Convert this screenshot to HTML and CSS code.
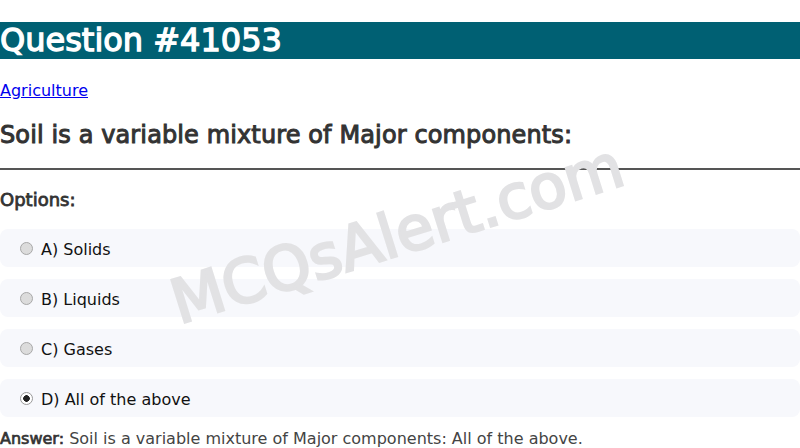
FILE: index.html
```html
<!DOCTYPE html>
<html>
<head>
<meta charset="utf-8">
<link rel="stylesheet" href="styles.css">
</head>
<body>
<div class="page">
  <h1 class="title">Question #41053</h1>
  <p class="cat"><a href="#">Agriculture</a></p>
  <h2 class="question">Soil is a variable mixture of Major components:</h2>
  <hr class="rule">
  <h3 class="opts-head">Options:</h3>
  <div class="options">
    <label class="option"><input type="radio" name="q" disabled><span>A) Solids</span></label>
    <label class="option"><input type="radio" name="q" disabled><span>B) Liquids</span></label>
    <label class="option"><input type="radio" name="q" disabled><span>C) Gases</span></label>
    <label class="option"><input type="radio" name="q" checked disabled><span>D) All of the above</span></label>
  </div>
  <p class="answer"><b>Answer:</b> Soil is a variable mixture of Major components: All of the above.</p>
  <div class="watermark">MCQsAlert.com</div>
</div>
</body>
</html>
```
FILE: styles.css
```css
html, body { margin: 0; padding: 0; background: #fff; }
body { font-family: "DejaVu Sans", sans-serif; overflow: hidden; }
.page { position: relative; height: 448px; overflow: hidden; }
.title {
  margin: 22px 0 0;
  background: #006073;
  color: #fff;
  font-size: 32px;
  font-weight: normal;
  -webkit-text-stroke: 1.3px #fff;
  line-height: 37px;
  height: 37px;
}
.cat { margin: 22px 0 0; font-size: 16px; line-height: 20px; }
.cat a { color: #0000ee; }
.question {
  margin: 19px 0 0;
  font-size: 24px;
  font-weight: normal;
  letter-spacing: 0.12px;
  -webkit-text-stroke: 1px #333;
  color: #333;
  line-height: 30px;
}
.rule { margin: 18px 0 0; border: 0; border-top: 2px solid #555; height: 0; }
.opts-head {
  margin: 19px 0 0;
  font-size: 18px;
  font-weight: normal;
  -webkit-text-stroke: 0.8px #333;
  color: #333;
  line-height: 22px;
}
.options { display: flex; flex-direction: column; gap: 12px; margin-top: 18px; }
.option {
  display: flex;
  align-items: center;
  height: 38px;
  background: #f7f8fc;
  border-radius: 8px;
  padding-left: 20px;
  font-size: 16px;
  color: #111;
}
.option span { position: relative; top: 1px; }
.option input {
  -webkit-appearance: none;
  appearance: none;
  box-sizing: border-box;
  margin: 0 8px 0 0;
  width: 13px;
  height: 13px;
  border-radius: 50%;
  border: 1px solid #a8a8a8;
  background: #dcdcdc;
}
.option input:checked {
  background: radial-gradient(circle, #222 0 3px, #fff 3.6px 100%);
  border-color: #999;
}
.answer { margin: 12px 0 0; font-size: 16px; line-height: 20px; color: #444; }
.answer b { color: #333; font-weight: normal; -webkit-text-stroke: 0.7px #333; }
.watermark {
  position: absolute;
  left: 162px;
  top: 198px;
  font-size: 61px;
  font-weight: normal;
  color: #e2e2e4;
  -webkit-text-stroke: 2.5px #e2e2e4;
  transform: rotate(-17.4deg);
  transform-origin: center;
  white-space: nowrap;
  pointer-events: none;
}
```
